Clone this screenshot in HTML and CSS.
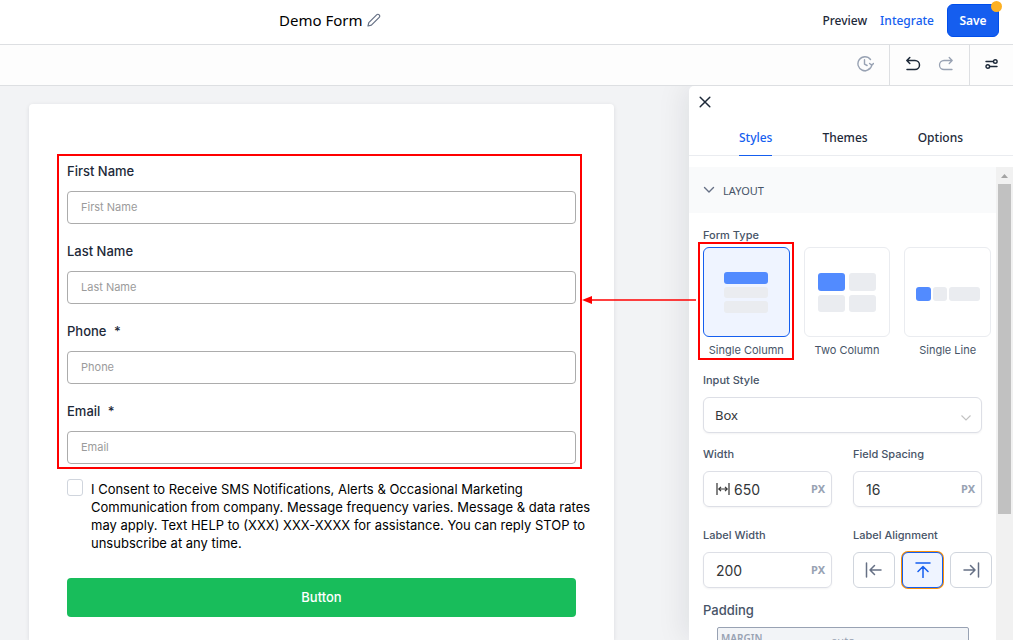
FILE: index.html
```html
<!DOCTYPE html>
<html lang="en">
<head>
<meta charset="UTF-8">
<meta name="viewport" content="width=device-width, initial-scale=1.0">
<title>Demo Form</title>
<link rel="stylesheet" href="styles.css">
</head>
<body>
<header class="topbar">
    <div class="form-title">
        <h1>Demo Form</h1>
        <button class="icon-btn" aria-label="Rename form">
            <svg width="14" height="14" viewBox="0 0 14 14" fill="none" stroke="#667085" stroke-width="1.2" stroke-linejoin="round"><path d="M1 13l.8-3.4L9.6 1.8a1.7 1.7 0 0 1 2.6 2.6L4.4 12.2z"/></svg>
        </button>
    </div>
    <nav class="top-actions">
        <a href="#preview">Preview</a>
        <a href="#integrate" class="link-blue">Integrate</a>
        <button class="save-btn">Save<span class="save-dot"></span></button>
    </nav>
</header>

<div class="toolbar">
    <div class="tool-group">
        <button class="icon-btn" aria-label="Version history">
            <svg width="18" height="18" viewBox="0 0 18 18" fill="none" stroke="#98a2b3" stroke-width="1.4" stroke-linecap="round" stroke-linejoin="round"><path d="M14.5 4.500A7 7 0 1 0 15.900 9.500M13.500 13.500A7 7 0 0 1 9 16M8.500 4.800v4.400l2.600 1.300M13.600 8.500l2.200 1.800L17.500 8.500"/></svg>
        </button>
    </div>
    <div class="tool-group">
        <button class="icon-btn" aria-label="Undo">
            <svg width="16" height="16" viewBox="0 0 16 16" fill="none" stroke="#1d2939" stroke-width="1.5" stroke-linecap="round" stroke-linejoin="round"><path d="M4.800 1.500L1.800 4.500l3 3M1.800 4.500h8.200a4.500 4.500 0 0 1 0 9H2"/></svg>
        </button>
        <button class="icon-btn" aria-label="Redo">
            <svg width="16" height="16" viewBox="0 0 16 16" fill="none" stroke="#98a2b3" stroke-width="1.300" stroke-linecap="round" stroke-linejoin="round"><path d="M11.200 1.500l3 3-3 3M14.200 4.500H6a4.500 4.500 0 0 0 0 9h8"/></svg>
        </button>
    </div>
    <div class="tool-group">
        <button class="icon-btn" aria-label="Form settings">
            <svg width="13" height="14" viewBox="0 0 13 14" fill="none" stroke="#1d2939" stroke-width="1.4" stroke-linecap="round"><path d="M1 4.500h7.500M5 9.500h7"/><circle cx="10.300" cy="4.500" r="1.800" fill="#fff"/><circle cx="2.800" cy="9.500" r="1.800" fill="#fff"/></svg>
        </button>
    </div>
</div>

<main class="builder">
    <section class="canvas">
        <form class="form-card">
            <div class="fields">
                <div class="field">
                    <label for="first-name">First Name</label>
                    <input type="text" id="first-name" placeholder="First Name">
                </div>
                <div class="field">
                    <label for="last-name">Last Name</label>
                    <input type="text" id="last-name" placeholder="Last Name">
                </div>
                <div class="field">
                    <label for="phone">Phone <span class="required">*</span></label>
                    <input type="tel" id="phone" placeholder="Phone">
                </div>
                <div class="field">
                    <label for="email">Email <span class="required">*</span></label>
                    <input type="email" id="email" placeholder="Email">
                </div>
                <div class="fields-mark">
                    <svg class="mark-arrow" width="116" height="8" viewBox="0 0 116 8"><path d="M10 4h106" stroke="#f00" stroke-width="1.500"/><path d="M2 4l10-4v8z" fill="#f00"/></svg>
                </div>
            </div>
            <div class="consent">
                <input type="checkbox" id="consent">
                <label for="consent">I Consent to Receive SMS Notifications, Alerts &amp; Occasional Marketing<br>Communication from company. Message frequency varies. Message &amp; data rates<br>may apply. Text HELP to (XXX) XXX-XXXX for assistance. You can reply STOP to<br>unsubscribe at any time.</label>
            </div>
            <button type="button" class="submit-btn">Button</button>
        </form>
    </section>

    <aside class="panel">
        <button class="icon-btn close-btn" aria-label="Close">
            <svg width="12" height="12" viewBox="0 0 12 12" stroke="#1d2939" stroke-width="1.5" stroke-linecap="round"><path d="M1.200 1.200l9.600 9.600M10.800 1.200l-9.600 9.600"/></svg>
        </button>
        <nav class="tabs">
            <a href="#styles" class="active">Styles</a>
            <a href="#themes">Themes</a>
            <a href="#options">Options</a>
        </nav>
        <div class="panel-scroll">
            <div class="panel-content">
                <button class="section-head">
                    <svg width="12" height="8" viewBox="0 0 12 8" fill="none" stroke="#667085" stroke-width="1.4" stroke-linecap="round" stroke-linejoin="round"><path d="M1.500 1.500L6 6l4.500-4.500"/></svg>
                    LAYOUT
                </button>
                <div class="section-body">
                    <h2 class="setting-label">Form Type</h2>
                    <div class="type-list">
                        <button class="type-option selected">
                            <span class="type-box">
                                <svg width="44" height="42" viewBox="0 0 44 42" fill="#eaecf0"><rect y="1" width="44" height="12" rx="3" fill="#528bff"/><rect y="16" width="44" height="11" rx="3"/><rect y="30" width="44" height="12" rx="3"/></svg>
                            </span>
                            Single Column
                        </button>
                        <button class="type-option">
                            <span class="type-box">
                                <svg width="58" height="40" viewBox="0 0 58 40" fill="#eaecf0"><rect y="1" width="27" height="18" rx="3" fill="#528bff"/><rect x="31" y="1" width="27" height="18" rx="3"/><rect y="23" width="27" height="17" rx="3"/><rect x="31" y="23" width="27" height="17" rx="3"/></svg>
                            </span>
                            Two Column
                        </button>
                        <button class="type-option">
                            <span class="type-box">
                                <svg width="64" height="18" viewBox="0 0 64 18" fill="#eaecf0"><rect y="4" width="15" height="14" rx="3" fill="#528bff"/><rect x="17" y="4" width="14" height="14" rx="3"/><rect x="33" y="4" width="31" height="14" rx="3"/></svg>
                            </span>
                            Single Line
                        </button>
                    </div>

                    <label class="setting-label" for="input-style">Input Style</label>
                    <div class="select-wrap">
                        <select id="input-style">
                            <option>Box</option>
                            <option>Line</option>
                        </select>
                        <svg width="12" height="8" viewBox="0 0 12 8" fill="none" stroke="#c2c2c2" stroke-width="1.1"><path d="M1.500 1.500L6 6l4.500-4.500"/></svg>
                    </div>

                    <div class="setting-grid">
                        <div class="setting">
                            <label class="setting-label" for="width">Width</label>
                            <div class="number-box">
                                <svg width="14" height="12" viewBox="0 0 14 12" fill="none" stroke="#333" stroke-width="1.200"><path d="M1 0v12M13 0v12M3 6h8M5 3.800L2.800 6 5 8.200M9 3.800L11.200 6 9 8.200"/></svg>
                                <input type="text" id="width" value="650">
                                <span class="unit">PX</span>
                            </div>
                        </div>
                        <div class="setting">
                            <label class="setting-label" for="spacing">Field Spacing</label>
                            <div class="number-box">
                                <input type="text" id="spacing" value="16">
                                <span class="unit">PX</span>
                            </div>
                        </div>
                        <div class="setting">
                            <label class="setting-label" for="label-width">Label Width</label>
                            <div class="number-box">
                                <input type="text" id="label-width" value="200">
                                <span class="unit">PX</span>
                            </div>
                        </div>
                        <div class="setting">
                            <h2 class="setting-label">Label Alignment</h2>
                            <div class="align-list">
                                <button class="align-btn" aria-label="Left">
                                    <svg width="18" height="16" viewBox="0 0 18 16" fill="none" stroke="#667085" stroke-width="1.5" stroke-linecap="round" stroke-linejoin="round"><path d="M1.500 1v14M16 8H5M9.500 3.500L5 8l4.500 4.500"/></svg>
                                </button>
                                <button class="align-btn selected" aria-label="Top">
                                    <svg width="16" height="16" viewBox="0 0 16 16" fill="none" stroke="#155eef" stroke-width="1.5" stroke-linecap="round" stroke-linejoin="round"><path d="M1 1h14M8 15.500V4.500M3 9.500l5-5 5 5"/></svg>
                                </button>
                                <button class="align-btn" aria-label="Right">
                                    <svg width="18" height="16" viewBox="0 0 18 16" fill="none" stroke="#667085" stroke-width="1.5" stroke-linecap="round" stroke-linejoin="round"><path d="M16.500 1v14M2 8h11M8.500 3.500L13 8l-4.500 4.500"/></svg>
                                </button>
                            </div>
                        </div>
                    </div>

                    <h2 class="padding-title">Padding</h2>
                    <div class="margin-box">
                        <span class="margin-name">MARGIN</span>
                        <span class="margin-value">auto</span>
                    </div>
                </div>
            </div>
            <div class="scrollbar">
                <svg width="17" height="17" viewBox="0 0 17 17"><path d="M5 11l3.500-4L12 11z" fill="#a3a3a3"/></svg>
                <div class="thumb"></div>
            </div>
        </div>
    </aside>
</main>
</body>
</html>
```
FILE: styles.css
```css
* {
    box-sizing: border-box;
}
body {
    font-family: Inter, Arial, sans-serif;
    margin: 0;
    height: 100vh;
    display: flex;
    flex-direction: column;
    overflow: hidden;
    color: #1d2939;
    background-color: #fff;
}
svg {
    display: block;
    flex-shrink: 0;
}
h1, h2 {
    margin: 0;
}
a {
    color: inherit;
    text-decoration: none;
}
button, input, select {
    font-family: inherit;
    color: inherit;
    margin: 0;
}
button {
    cursor: pointer;
}
.icon-btn {
    display: flex;
    padding: 0;
    border: none;
    background: none;
}

/* top bar */
.topbar {
    flex: none;
    display: flex;
    align-items: center;
    justify-content: space-between;
    height: 45px;
    padding: 0 14px 4px 279px;
    border-bottom: 1px solid #dddfe2;
    font-family: "Noto Sans", sans-serif;
}
.form-title {
    display: flex;
    align-items: center;
    gap: 4px;
}
.form-title h1 {
    font-size: 15px;
    font-weight: 400;
    color: #000;
}
.top-actions {
    display: flex;
    align-items: center;
    gap: 13px;
    font-size: 12px;
    font-weight: 500;
}
.link-blue {
    color: #155eef;
}
.save-btn {
    position: relative;
    width: 52px;
    height: 33px;
    padding: 0;
    border: 1px solid #004eeb;
    border-radius: 6px;
    background-color: #155eef;
    color: #fff;
    font-size: 12px;
    font-weight: 600;
}
.save-dot {
    position: absolute;
    top: -4px;
    right: -4px;
    width: 11px;
    height: 11px;
    border-radius: 50%;
    background-color: #fdb022;
}

/* toolbar */
.toolbar {
    flex: none;
    display: flex;
    justify-content: flex-end;
    height: 41px;
    border-bottom: 1px solid #dddfe2;
    background-color: #fdfdfd;
}
.tool-group {
    display: flex;
    align-items: center;
    gap: 17px;
    padding: 0 15px 3px;
}
.tool-group + .tool-group {
    border-left: 1px solid #dddfe2;
}

/* form preview */
.builder {
    flex: 1;
    min-height: 0;
    display: grid;
    grid-template-columns: minmax(0, 1fr) 324px;
    background-color: #f2f3f5;
}
.canvas {
    padding: 18px 75px 0 29px;
}
.form-card {
    height: 100%;
    padding: 57px 38px 0;
    border-radius: 4px 4px 0 0;
    background-color: #fff;
    box-shadow: 0 1px 4px rgba(16, 24, 40, 0.1);
}
.fields {
    position: relative;
    display: flex;
    flex-direction: column;
    gap: 17px;
}
.field {
    display: flex;
    flex-direction: column;
    gap: 10px;
}
.field label {
    font-size: 13px;
    line-height: 20px;
    font-weight: 500;
}
.required {
    margin-left: 4px;
}
.field input {
    height: 33px;
    padding: 0 13px 2px;
    border: 1px solid #acacac;
    border-radius: 4px;
    background-color: #fff;
    font-size: 11px;
}
.field input::placeholder {
    color: #9b9b9b;
}
.fields-mark {
    position: absolute;
    z-index: 2;
    inset: -7px -6px -5px -10px;
    border: 2px solid #f00;
    pointer-events: none;
}
.mark-arrow {
    position: absolute;
    left: 100%;
    top: 140px;
}
.consent {
    display: flex;
    gap: 8px;
    margin-top: 15px;
}
.consent input {
    appearance: none;
    flex: none;
    width: 16px;
    height: 17px;
    border: 1px solid #d0d5dd;
    border-radius: 3px;
    background-color: #fff;
}
.consent label {
    margin-top: 1px;
    font-size: 13px;
    line-height: 18px;
    color: #000;
    white-space: nowrap;
}
.submit-btn {
    width: 100%;
    height: 39px;
    margin-top: 26px;
    padding: 0 0 2px;
    border: none;
    border-radius: 4px;
    background-color: #18bd5b;
    color: #fff;
    font-size: 13px;
    font-weight: 500;
}

/* settings panel */
.panel {
    display: flex;
    flex-direction: column;
    min-height: 0;
    border-top-left-radius: 5px;
    background-color: #fff;
    box-shadow: -6px 0 28px rgba(16, 24, 40, 0.08);
    clip-path: inset(0 0 0 -80px);
}
.close-btn {
    margin: 10px 0 0 10px;
}
.tabs {
    flex: none;
    display: flex;
    justify-content: center;
    gap: 50px;
    margin-top: 19px;
    border-bottom: 1px solid #eaecf0;
    font-family: "Noto Sans", sans-serif;
    font-size: 12px;
    font-weight: 500;
    line-height: 22px;
}
.tabs a {
    height: 29px;
    margin-bottom: -1px;
}
.tabs .active {
    color: #155eef;
    border-bottom: 1px solid #155eef;
}
.panel-scroll {
    flex: 1;
    min-height: 0;
    display: flex;
    margin-top: 11px;
}
.panel-content {
    flex: 1;
    overflow: hidden;
}
.section-head {
    display: flex;
    align-items: center;
    gap: 8px;
    width: 100%;
    height: 46px;
    padding: 0 14px;
    border: none;
    background-color: #f9fafb;
    color: #475467;
    font-family: "Noto Sans", sans-serif;
    font-size: 11px;
}
.section-body {
    padding: 14px 14px 0;
}
.setting-label {
    display: block;
    font-size: 11px;
    line-height: 16px;
    font-weight: 500;
    color: #475467;
}
.type-list {
    display: flex;
    gap: 14px;
    margin: 4px -9px 14px 0;
}
.type-option {
    position: relative;
    flex: 1;
    padding: 0;
    border: none;
    background: none;
    font-size: 11px;
    line-height: 16px;
    color: #475467;
    white-space: nowrap;
}
.type-box {
    display: flex;
    align-items: center;
    justify-content: center;
    height: 90px;
    margin-bottom: 5px;
    border: 1px solid #eaecf0;
    border-radius: 6px;
}
.type-option.selected .type-box {
    border-color: #155eef;
    background-color: #eff4ff;
}
.type-option.selected::after {
    content: "";
    position: absolute;
    inset: -5px -4px -2px -5px;
    border: 2px solid #f00;
}
.select-wrap {
    position: relative;
    margin: 9px 0 13px;
}
.select-wrap select {
    appearance: none;
    display: block;
    width: 100%;
    height: 36px;
    padding: 0 11px;
    border: 1px solid #dddfe6;
    border-radius: 6px;
    background-color: #fff;
    box-shadow: 0 1px 2px rgba(16, 24, 40, 0.05);
    color: #333639;
    font-family: "Noto Sans", sans-serif;
    font-size: 13px;
}
.select-wrap svg {
    position: absolute;
    right: 10px;
    top: 17px;
}
.setting-grid {
    display: grid;
    grid-template-columns: repeat(2, minmax(0, 1fr));
    gap: 20px 21px;
}
.number-box {
    display: flex;
    align-items: center;
    gap: 4px;
    height: 36px;
    margin-top: 9px;
    padding: 0 6px 0 12px;
    border: 1px solid #dddfe6;
    border-radius: 6px;
    box-shadow: 0 1px 2px rgba(16, 24, 40, 0.05);
}
.number-box input {
    flex: 1;
    min-width: 0;
    padding: 0;
    border: none;
    background: none;
    color: #333639;
    font-size: 14px;
}
.unit {
    padding-bottom: 2px;
    font-family: "Noto Sans", sans-serif;
    font-size: 11px;
    font-weight: 700;
    color: #98a2b3;
}
.align-list {
    display: flex;
    gap: 7px;
    margin: 9px -10px 0 0;
}
.align-btn {
    flex: 1;
    display: flex;
    align-items: center;
    justify-content: center;
    height: 36px;
    padding: 0;
    border: 1px solid #d0d5dd;
    border-radius: 6px;
    background-color: #fff;
}
.align-btn.selected {
    border-color: #155eef;
    background-color: #eff4ff;
    box-shadow: 0 0 0 1px #f79009;
}
.padding-title {
    margin: 13px 0 8px;
    font-size: 13px;
    line-height: 18px;
    font-weight: 500;
    color: #475467;
}
.margin-box {
    display: grid;
    grid-template-columns: 1fr auto 1fr;
    height: 160px;
    margin: 0 13px 0 14px;
    padding: 3px;
    border: 1px solid #98a2b3;
    border-radius: 2px;
    background-color: #f2f4f7;
    color: #98a2b3;
    font-family: "Noto Sans", sans-serif;
    font-size: 10px;
    line-height: 14px;
}
.margin-name {
    font-weight: 600;
}
.margin-value {
    margin-top: 3px;
    font-size: 11px;
}
.scrollbar {
    flex: none;
    width: 17px;
    background-color: #f1f1f1;
}
.thumb {
    height: 330px;
    margin: 0 2px;
    background-color: #c1c1c1;
}
```
